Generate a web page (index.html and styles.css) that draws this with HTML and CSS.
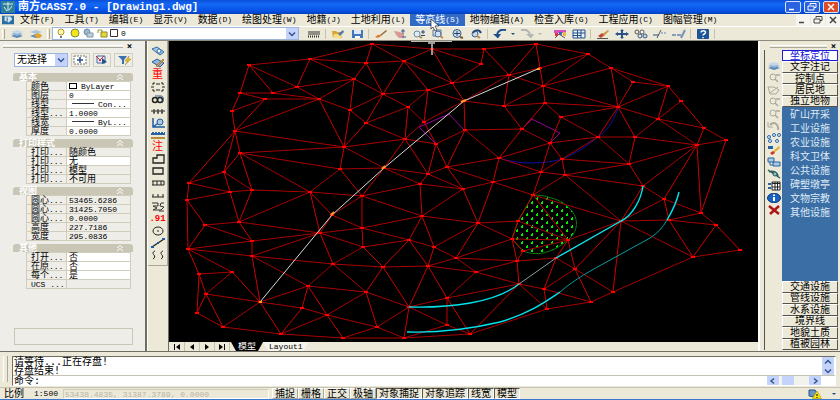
FILE: index.html
```html
<!DOCTYPE html>
<html lang="zh-CN">
<head>
    <meta charset="UTF-8">
    <meta name="viewport" content="width=device-width, initial-scale=1.0">
    <title>南方CASS7.0 - [Drawing1.dwg]</title>
    <link rel="stylesheet" href="styles.css">
</head>
<body>
    <svg class="defs" width="0" height="0">
        <symbol id="layers" viewBox="0 0 14 10"><path d="M1 7l6-2 6 2-6 2z" fill="#5b86b5"/><path d="M1 5l6-2 6 2-6 2z" fill="#8fb2d8"/><path d="M1 3l6-2 6 2-6 2z" fill="#c3d6ea"/></symbol>
        <symbol id="layers2" viewBox="0 0 14 10"><path d="M1 7l6-2 6 2-6 2z" fill="#5b86b5"/><path d="M1 3l6-2 6 2-6 2z" fill="#a9c4e2"/><path d="M5 6l4-2 4 2-2 3H8z" fill="#e0a52c"/></symbol>
        <symbol id="ltype" viewBox="0 0 14 10"><path d="M1 3h12M1 5h12" stroke="#333"/><path d="M1 7.500h12" stroke="#333" stroke-dasharray="1 1" stroke-width="2"/></symbol>
        <symbol id="open" viewBox="0 0 14 10"><path d="M1 2h4l1 1h5v6H2z" fill="#d9a53a"/><path d="M3 5h9l-2 4H2z" fill="#f6dd84"/><path d="M7 5l5-4 1 2-4 4z" fill="#4e7db0"/></symbol>
        <symbol id="save" viewBox="0 0 14 10"><path d="M2 1h11v8H2z" fill="#3f78bd"/><path d="M4 1h7v4H4z" fill="#dfeaf6"/><path d="M5 7h5v2H5z" fill="#fff"/></symbol>
        <symbol id="brush" viewBox="0 0 14 10"><path d="M6 6l6-5 1 1-6 5z" fill="#9a6a3b"/><path d="M1 8c2 0 2-3 5-2l1 1C5 9 3 9 1 8z" fill="#e0762c"/></symbol>
        <symbol id="hand" viewBox="0 0 14 10"><path d="M1 2l6 1 4 2v4H6L3 6z" fill="#d89a96"/><path d="M10 0v5M8 2h4M9 8h4" stroke="#3b5f92"/></symbol>
        <symbol id="zoompm" viewBox="0 0 14 10"><circle cx="5" cy="5" r="3" fill="#dcebf5" stroke="#6989a8"/><path d="M7 7l3 2" stroke="#b98c45" stroke-width="2"/><path d="M11 1v4M9 3h4M9 6.500h4" stroke="#2b4a78"/></symbol>
        <symbol id="zoomwin" viewBox="0 0 14 10"><path d="M2 1h8v6H2z" fill="none" stroke="#5477a1"/><circle cx="7" cy="5" r="3" fill="#d2e4f3" stroke="#436a96"/><path d="M9 7l3 2" stroke="#b98c45" stroke-width="2"/></symbol>
        <symbol id="zoomall" viewBox="0 0 14 10"><circle cx="7" cy="4.500" r="4" fill="#cfe0ee" stroke="#33577f"/><path d="M4 4.500h6M7 2v5" stroke="#22426d"/><path d="M10 8l3 1" stroke="#7d5b2b" stroke-width="2"/></symbol>
        <symbol id="zoomprev" viewBox="0 0 14 10"><circle cx="6" cy="5" r="3" fill="#c5d8ea" stroke="#3e648f"/><path d="M4 4c1-3 6-4 8 0" fill="none" stroke="#23497b" stroke-width="2"/><path d="M8 7l3 2" stroke="#b98c45" stroke-width="2"/></symbol>
        <symbol id="undo" viewBox="0 0 14 10"><path d="M13 1C8 0 4 2 4 7" fill="none" stroke="#1f4e8c" stroke-width="2"/><path d="M0 5h8L5 9.500z" fill="#1f4e8c"/></symbol>
        <symbol id="redo" viewBox="0 0 14 10"><path d="M1 1c5-1 9 1 9 6" fill="none" stroke="#b3b5b5" stroke-width="2"/><path d="M6 5h8l-3 4.500z" fill="#b3b5b5"/></symbol>
        <symbol id="palette" viewBox="0 0 14 10"><path d="M1 1h12v3H1z" fill="#d94fc0"/><path d="M2 4h3v3H2z" fill="#e8332a"/><path d="M6 3h3v3H6z" fill="#3568c8"/><path d="M10 3h3v4h-3z" fill="#e9b93c"/><path d="M2 9l4-4 6 4" fill="none" stroke="#654c72"/></symbol>
        <symbol id="table" viewBox="0 0 14 10"><path d="M1 1h12v8H1z" fill="#e8f0f8" stroke="#27518a"/><path d="M5.500 1v8M9 1v8M1 4h12M1 6.500h8" stroke="#27518a"/></symbol>
        <symbol id="eraser" viewBox="0 0 14 10"><path d="M5 6l7-5 1 1-6 6z" fill="#d1963c"/><path d="M2 7l4-3 2 2-3 3z" fill="#c2443a"/><path d="M1 9.500h11" stroke="#555"/></symbol>
        <symbol id="move" viewBox="0 0 14 10"><path d="M7 1v8M2 5h10" stroke="#2a5286" stroke-width="2"/><path d="M7 0l2 2H5zM7 10l2-2H5zM0 5l3-2v4zM14 5l-3-2v4z" fill="#2a5286"/></symbol>
        <symbol id="copy" viewBox="0 0 14 10"><circle cx="3" cy="3" r="2" fill="none" stroke="#555"/><circle cx="8" cy="3" r="2" fill="#fff" stroke="#555"/><circle cx="6" cy="7" r="2" fill="none" stroke="#39587d"/><circle cx="11" cy="7" r="2" fill="#c7daea" stroke="#39587d"/></symbol>
        <symbol id="trim" viewBox="0 0 14 10"><path d="M0 6h6" stroke="#26508a"/><path d="M4 9l4-8" stroke="#555"/><path d="M8 4h6" stroke="#5c8ac0" stroke-dasharray="2 1"/></symbol>
        <symbol id="extend" viewBox="0 0 14 10"><path d="M0 6h4M5 6h4" stroke="#26508a"/><path d="M9 9l4-8" stroke="#6d93be" stroke-width="2"/></symbol>
        <symbol id="help" viewBox="0 0 14 10"><rect x="1" width="12" height="10" rx="1" fill="#1d5499"/><path d="M5 3.500C5 1 9.500 1 9.500 3.500 9.500 5 7 5 7 6.500M7 8v1.200" fill="none" stroke="#fff" stroke-width="1.500"/></symbol>
        <symbol id="pencilLayer" viewBox="0 0 14 10"><path d="M1 4l5-3 7 4-4 4z" fill="#8fb5dc" stroke="#2a6098"/><path d="M5 8l7-7 1 1-7 7z" fill="#dca03c" stroke="#71501c" stroke-width=".5"/></symbol>
        <symbol id="eyeLayer" viewBox="0 0 14 10"><path d="M1 3l5-2 7 5-4 3z" fill="#a7c8e8" stroke="#2d6ca8"/><circle cx="8" cy="5" r="2" fill="#fff" stroke="#2d6ca8"/></symbol>
        <symbol id="brackets" viewBox="0 0 14 10"><path d="M4 1H2v2M2 7v2h2M10 1h2v2M12 7v2h-2M0 5h3M11 5h3M5 2h4M5 8h4" fill="none" stroke="#222"/></symbol>
        <symbol id="find" viewBox="0 0 14 10"><circle cx="4" cy="6" r="2.500" fill="none" stroke="#222" stroke-width="1.500"/><circle cx="9" cy="6" r="2.500" fill="none" stroke="#222" stroke-width="1.500"/><path d="M4 2h6c3 0 3 5 1 7" fill="none" stroke="#355b8c"/></symbol>
        <symbol id="fence" viewBox="0 0 14 10"><path d="M0 5h14M3 3v4M7 3v4M11 3v4M2 7h2M6 7h2M10 7h2" stroke="#222"/></symbol>
        <symbol id="axis" viewBox="0 0 14 10"><path d="M2 0v9h12M2 9l8-6" fill="none" stroke="#1c5ca4" stroke-width="1.500"/><circle cx="9" cy="4" r="3" fill="#a7c8e8" stroke="#1c5ca4"/></symbol>
        <symbol id="ruler" viewBox="0 0 14 10"><path d="M0 2h14v3H0z" fill="#28629f"/><path d="M0 7h14v2H0z" fill="#b98c3a"/><path d="M0 2.500h14" stroke="#fff" stroke-dasharray="1 2"/></symbol>
        <symbol id="poly" viewBox="0 0 14 10"><path d="M2 9V4h4V1h7v8z" fill="none" stroke="#222" stroke-width="1.300"/></symbol>
        <symbol id="rect" viewBox="0 0 14 10"><path d="M2 2h10v6H2z" fill="none" stroke="#222" stroke-width="1.300"/></symbol>
        <symbol id="rail" viewBox="0 0 14 10"><path d="M1 3h12M1 7h12M2 3v4M6 3v4M10 3v4M13 3v4" stroke="#222"/></symbol>
        <symbol id="comb" viewBox="0 0 14 10"><path d="M1 7h12M2 4v3M7 4v3M12 4v3" stroke="#222"/></symbol>
        <symbol id="bush" viewBox="0 0 14 10"><path d="M1 1h6v3H2l4 2-4 2h8l3-3-4-1 1-3h3M8 9h5" fill="none" stroke="#333"/></symbol>
        <symbol id="point" viewBox="0 0 14 10"><ellipse cx="7" cy="5" rx="5" ry="4" fill="none" stroke="#222"/><path d="M6 5h2" stroke="#222"/></symbol>
        <symbol id="slope" viewBox="0 0 14 10"><path d="M1 9l12-8" stroke="#222" stroke-width="1.300"/><path d="M0 8h3v2H0zM11 0h3v2h-3zM6 4h2v2H6z" fill="#1c5ca4"/></symbol>
        <symbol id="waves" viewBox="0 0 14 10"><path d="M4 1C1 2 2 4 3 5s1 3-1 4M12 1c-3 1-2 3-1 4s1 3-1 4" fill="none" stroke="#222"/></symbol>
        <symbol id="zoomgrey" viewBox="0 0 14 10"><circle cx="6" cy="4" r="3" fill="none" stroke="#aaa89c"/><path d="M8 6l3 3M9 2h4" stroke="#aaa89c" stroke-width="1.500"/></symbol>
        <symbol id="shapegrey" viewBox="0 0 14 10"><path d="M1 2h6l5 3-3 4H3z" fill="none" stroke="#aaa89c"/><path d="M3 8l8-6" stroke="#aaa89c"/></symbol>
        <symbol id="undogrey" viewBox="0 0 14 10"><path d="M3 4c4-4 9-1 8 5" fill="none" stroke="#aaa89c" stroke-width="2"/><path d="M1 1v5h5" fill="none" stroke="#aaa89c"/></symbol>
        <symbol id="dots" viewBox="0 0 14 10"><g fill="#e4eefa" stroke="#2668ad"><circle cx="7" cy="2" r="1.500"/><circle cx="12" cy="2" r="1.500"/><circle cx="2" cy="4" r="1.500"/><circle cx="3" cy="8" r="1.500"/><circle cx="10" cy="8" r="1.500"/></g></symbol>
        <symbol id="erase2" viewBox="0 0 14 10"><path d="M1 1h5v3H1z" fill="#28629f"/><path d="M5 7l7-6 1 2-6 5z" fill="#e0b13c"/><path d="M3 8l3-2 2 2-3 2z" fill="#c33"/></symbol>
        <symbol id="props" viewBox="0 0 14 10"><path d="M1 1h6v4H1zM6 5h7v4H6z" fill="#a7c8e8" stroke="#28629f"/><path d="M3 5v3h3" fill="none" stroke="#28629f"/></symbol>
        <symbol id="link" viewBox="0 0 14 10"><path d="M1 1l12 8M2 3c3-2 9 0 9 5" fill="none" stroke="#285f58" stroke-width="1.500"/><circle cx="8" cy="5" r="2" fill="#8fc0cf" stroke="#285f58"/></symbol>
        <symbol id="grid" viewBox="0 0 14 10"><path d="M5 1h8v8H5z" fill="#fff" stroke="#222"/><path d="M5 2.500h8M8 1v8M10.500 1v8M5 6h8" stroke="#222"/><path d="M1 3h3M1 7h3" stroke="#28629f" stroke-width="2"/></symbol>
        <symbol id="info" viewBox="0 0 14 10"><ellipse cx="7" cy="5" rx="6.500" ry="4.800" fill="#1862c0" stroke="#123a78"/><path d="M7 1.500v1.500M7 4v4" stroke="#fff" stroke-width="2"/></symbol>
        <symbol id="cross" viewBox="0 0 14 10"><path d="M2 1l10 8M12 1L3 9" stroke="#b01515" stroke-width="2.500"/></symbol>
        <symbol id="down" viewBox="0 0 10 8"><path d="M2 2.500l3 3 3-3" fill="none" stroke="#35548c" stroke-width="1.500"/></symbol>
        <symbol id="up" viewBox="0 0 10 8"><path d="M2 5.500l3-3 3 3" fill="none" stroke="#35548c" stroke-width="1.500"/></symbol>
        <symbol id="fold" viewBox="0 0 10 8"><path d="M2 4l3-2.500L8 4M2 7l3-2.500L8 7" fill="none" stroke="#fff"/></symbol>
        <symbol id="min" viewBox="0 0 14 10"><path d="M3 7.500h5" stroke="currentColor" stroke-width="1.500"/></symbol>
        <symbol id="restore" viewBox="0 0 14 10"><path d="M5 3V1.500h6v4H9M3 4h6v4H3z" fill="none" stroke="currentColor"/></symbol>
        <symbol id="close" viewBox="0 0 14 10"><path d="M4 2l6 6M10 2L4 8" stroke="currentColor" stroke-width="1.500"/></symbol>
    </svg>

    <header class="titlebar">
        <svg class="logo" viewBox="0 0 14 12"><path d="M0 0h14v12H0z" fill="#2f7f96"/><path d="M2 3h10M7 1v9M3 6l3 4M11 5L8 9" stroke="#d9eef2"/></svg>
        <h1>南方CASS7.0 - [Drawing1.dwg]</h1>
        <div class="winbtns">
            <button aria-label="最小化"><svg><use href="#min"/></svg></button>
            <button aria-label="还原"><svg><use href="#restore"/></svg></button>
            <button class="red" aria-label="关闭"><svg><use href="#close"/></svg></button>
        </div>
    </header>

    <nav class="menubar">
        <svg class="logo" viewBox="0 0 14 12"><path d="M0 1h14v10H0z" fill="#2b6ea4"/><path d="M3 2h7l2 3-4 4-5-2z" fill="#cfe5f2"/><path d="M6 3v5" stroke="#1c4f7d"/></svg>
        <button>文件<small>(F)</small></button>
        <button>工具<small>(T)</small></button>
        <button>编辑<small>(E)</small></button>
        <button>显示<small>(V)</small></button>
        <button>数据<small>(D)</small></button>
        <button>绘图处理<small>(W)</small></button>
        <button>地籍<small>(J)</small></button>
        <button>土地利用<small>(L)</small></button>
        <button class="active">等高线<small>(S)</small>
            <svg class="cursor" viewBox="0 0 10 14"><path d="M1 1v10l2-2 2 4 2-1-2-4h4z" fill="#fff" stroke="#222" stroke-width=".7"/></svg>
        </button>
        <button>地物编辑<small>(A)</small></button>
        <button>检查入库<small>(G)</small></button>
        <button>工程应用<small>(C)</small></button>
        <button>图幅管理<small>(M)</small></button>
        <div class="docbtns">
            <button aria-label="最小化文档"><svg><use href="#min"/></svg></button>
            <button aria-label="还原文档"><svg><use href="#restore"/></svg></button>
            <button aria-label="关闭文档"><svg><use href="#close"/></svg></button>
        </div>
    </nav>

    <div class="toolbar">
        <i class="grip"></i>
        <button aria-label="图层"><svg><use href="#layers"/></svg></button>
        <button aria-label="图层状态"><svg><use href="#layers2"/></svg></button>
        <i class="grip"></i>
        <div class="combo layer">
            <svg class="states" viewBox="0 0 62 10">
                <circle cx="5" cy="4" r="3" fill="#fff6a8" stroke="#a99a33"/><path d="M4 8h2v2H4z" fill="#777"/>
                <circle cx="19" cy="5" r="4" fill="#f7e21c" stroke="#6f9440"/>
                <circle cx="31" cy="4" r="3" fill="#9db9cf" stroke="#6f8ca4"/><path d="M31 5h6v4h-6z" fill="#c2cfda" stroke="#7f96a8"/>
                <path d="M42 5V2h4v2" fill="none" stroke="#97922a"/><path d="M45 4h6v5h-6z" fill="#e5d83a" stroke="#8d8726"/>
                <path d="M54.500 1.500h7v7h-7z" fill="#fff" stroke="#333"/>
            </svg>
            <select aria-label="当前图层"><option>0</option></select>
            <span class="arrow"><svg><use href="#down"/></svg></span>
        </div>
        <i class="gap"></i>
        <button aria-label="线型"><svg><use href="#ltype"/></svg></button>
        <i class="sep"></i>
        <button aria-label="打开"><svg><use href="#open"/></svg></button>
        <button aria-label="保存"><svg><use href="#save"/></svg></button>
        <i class="sep"></i>
        <button aria-label="特性匹配"><svg><use href="#brush"/></svg></button>
        <button aria-label="平移"><svg><use href="#hand"/></svg></button>
        <button aria-label="实时缩放"><svg><use href="#zoompm"/></svg></button>
        <button aria-label="窗口缩放"><svg><use href="#zoomwin"/></svg></button>
        <button aria-label="全图"><svg><use href="#zoomall"/></svg></button>
        <button aria-label="前图"><svg><use href="#zoomprev"/></svg></button>
        <i class="sep"></i>
        <button aria-label="放弃"><svg><use href="#undo"/></svg></button>
        <i class="more"></i>
        <button aria-label="重做"><svg><use href="#redo"/></svg></button>
        <i class="more off"></i>
        <button aria-label="特性"><svg><use href="#palette"/></svg></button>
        <button aria-label="表格"><svg><use href="#table"/></svg></button>
        <i class="sep"></i>
        <button aria-label="删除"><svg><use href="#eraser"/></svg></button>
        <button aria-label="移动"><svg><use href="#move"/></svg></button>
        <button aria-label="复制"><svg><use href="#copy"/></svg></button>
        <button aria-label="修剪"><svg><use href="#trim"/></svg></button>
        <button aria-label="延伸"><svg><use href="#extend"/></svg></button>
        <i class="sep"></i>
        <button aria-label="帮助"><svg><use href="#help"/></svg></button>
        <i class="sep"></i>
    </div>

    <main>
        <aside class="props">
            <div class="grabber"><i></i><button aria-label="关闭特性">×</button></div>
            <div class="picker">
                <div class="combo">
                    <select aria-label="选择对象"><option>无选择</option></select>
                    <span class="arrow"><svg><use href="#down"/></svg></span>
                </div>
                <button aria-label="切换"><svg viewBox="0 0 14 10"><path d="M1 1h12v8H1z" fill="#fff" stroke="#777" stroke-dasharray="2 1"/><path d="M4 5h6M7 2v6" stroke="#27518a" stroke-width="1.500"/></svg></button>
                <button aria-label="选择"><svg viewBox="0 0 14 10"><path d="M2 1h8v7H2z" fill="#e8eef8" stroke="#4a6a9a"/><path d="M1 1l5 5M9 1L4 6" stroke="#c8322a"/><path d="M7 3v6l5-2z" fill="#27518a"/></svg></button>
                <button aria-label="快速选择"><svg viewBox="0 0 14 10"><path d="M1 1h9L7 5v4H5V5z" fill="#3a6fae"/><path d="M12 1L8 6h3L8 10l6-6h-3z" fill="#f2c81e" stroke="#9b7b12" stroke-width=".5"/></svg></button>
            </div>
            <section>
                <h2>基本<svg><use href="#fold"/></svg></h2>
                <table>
                    <tr><th>颜色</th><td><i class="swatch"></i><small>ByLayer</small></td></tr>
                    <tr><th>图层</th><td><small>0</small></td></tr>
                    <tr><th>线型</th><td><i class="stroke"></i><small>Con...</small></td></tr>
                    <tr><th>线型<small>...</small></th><td><small>1.0000</small></td></tr>
                    <tr><th>线宽</th><td><i class="stroke"></i><small>ByL...</small></td></tr>
                    <tr><th>厚度</th><td><small>0.0000</small></td></tr>
                </table>
            </section>
            <section>
                <h2>打印样式<svg><use href="#fold"/></svg></h2>
                <table>
                    <tr><th>打印<small>...</small></th><td class="ro">随颜色</td></tr>
                    <tr><th>打印<small>...</small></th><td>无</td></tr>
                    <tr><th>打印<small>...</small></th><td class="ro">模型</td></tr>
                    <tr><th>打印<small>...</small></th><td class="ro">不可用</td></tr>
                </table>
            </section>
            <section>
                <h2>视图<svg><use href="#fold"/></svg></h2>
                <table>
                    <tr><th>圆心<small>...</small></th><td class="ro"><small>53465.6286</small></td></tr>
                    <tr><th>圆心<small>...</small></th><td class="ro"><small>31425.7050</small></td></tr>
                    <tr><th>圆心<small>...</small></th><td class="ro"><small>0.0000</small></td></tr>
                    <tr><th>高度</th><td class="ro"><small>227.7186</small></td></tr>
                    <tr><th>宽度</th><td class="ro"><small>295.0836</small></td></tr>
                </table>
            </section>
            <section>
                <h2>其他<svg><use href="#fold"/></svg></h2>
                <table>
                    <tr><th>打开<small>...</small></th><td>否</td></tr>
                    <tr><th>在原<small>...</small></th><td>否</td></tr>
                    <tr><th>每个<small>...</small></th><td>是</td></tr>
                    <tr><th><small>UCS ...</small></th><td class="ro"></td></tr>
                </table>
            </section>
            <div class="hint"></div>
        </aside>

        <div class="rail left">
            <div class="tools">
                <button aria-label="查看实体编码"><svg><use href="#eyeLayer"/></svg></button>
                <button aria-label="加入实体编码"><svg><use href="#pencilLayer"/></svg></button>
                <button class="word">重</button>
                <button aria-label="批量选取"><svg><use href="#brackets"/></svg></button>
                <button aria-label="查找"><svg><use href="#find"/></svg></button>
                <button aria-label="线型换向"><svg><use href="#fence"/></svg></button>
                <button aria-label="坐标"><svg><use href="#axis"/></svg></button>
                <button aria-label="距离"><svg><use href="#ruler"/></svg></button>
                <button class="word">注</button>
                <button aria-label="多点房屋"><svg><use href="#poly"/></svg></button>
                <button aria-label="四点房屋"><svg><use href="#rect"/></svg></button>
                <button aria-label="依比例围墙"><svg><use href="#rail"/></svg></button>
                <button aria-label="陡坎"><svg><use href="#comb"/></svg></button>
                <button aria-label="斜坡"><svg><use href="#bush"/></svg></button>
                <button class="word num">.91</button>
                <button aria-label="图根点"><svg><use href="#point"/></svg></button>
                <button aria-label="电力线"><svg><use href="#slope"/></svg></button>
                <button aria-label="道路"><svg><use href="#waves"/></svg></button>
            </div>
        </div>

        <div class="drawing">
            <svg id="canvas" viewBox="169 41 589 300" preserveAspectRatio="xMinYMin meet">
                <defs>
                    <pattern id="hatch" width="10" height="8" patternUnits="userSpaceOnUse">
                        <path d="M1 2h2v2H1zM2 1h1v1H2zM6 6h2v2H6zM7 5h1v1H7z" fill="#00f000"/>
                    </pattern>
                </defs>
                <path d="M533 195C545 195 557 199 563 203C580 214 580 230 568 240C556 250 540 258 523 251L512 239L518 221Z" fill="url(#hatch)" stroke="#0a7d0a"/>
                <path d="M499 158C520 165 545 164 562 159C580 152 590 143 598 137C610 128 615 118 618 107" class="line blue"/>
                <path d="M436 144L419 127L449 114L464 130M522 129L532 119L560 133L550 143" class="line magenta"/>
                <g id="mesh"></g>
                <path d="M409 307C450 308 495 303 519 284M556 258L621 221C632 216 641 200 643 186" class="line cyan"/>
                <path d="M519 284L556 258" class="line dim"/>
                <path d="M407 332C440 333 470 329 500 322C530 313 545 302 560 292M667 220Q676 205 679 192" class="line cyan"/>
                <path d="M560 292C575 279 590 271 612 259L650 238Q661 231 667 220" class="line teal"/>
                <path d="M260 302L332 215L384 168L464 101L540 68" class="line white"/>
                <path d="M259 302h3M331 215l3-3M382 169l3-3M461 102l5-2M537 69h3" class="line orange"/>
                <path d="M411 41.500h41" stroke="#bdbbb0"/>
                <path d="M428 43h7M432 42v13" stroke="#999" stroke-width="2"/>
            </svg>
            <div class="tabs">
                <button aria-label="第一页"><svg viewBox="0 0 10 8"><path d="M2.500 1v6" stroke="#000"/><path d="M8 1v6L4 4z"/></svg></button>
                <button aria-label="上一页"><svg viewBox="0 0 10 8"><path d="M7 1v6L3 4z"/></svg></button>
                <button aria-label="下一页"><svg viewBox="0 0 10 8"><path d="M3 1v6l4-3z"/></svg></button>
                <button aria-label="最后一页"><svg viewBox="0 0 10 8"><path d="M2 1v6l4-3z"/><path d="M7.500 1v6" stroke="#000"/></svg></button>
                <a class="tab current" href="#canvas">模型</a>
                <a class="tab" href="#canvas"><small>Layout1</small></a>
            </div>
        </div>

        <aside class="screenmenu">
            <div class="grabber"><i></i><button aria-label="关闭屏幕菜单">×</button></div>
            <div class="cols">
                <div class="rail right">
                    <button aria-label="图层管理"><svg><use href="#layers"/></svg></button>
                    <button aria-label="缩放"><svg><use href="#zoomgrey"/></svg></button>
                    <button aria-label="选择区域"><svg><use href="#shapegrey"/></svg></button>
                    <button aria-label="放大"><svg><use href="#zoomgrey"/></svg></button>
                    <button aria-label="缩小"><svg><use href="#zoomgrey"/></svg></button>
                    <button aria-label="回退"><svg><use href="#undogrey"/></svg></button>
                    <button aria-label="展点"><svg><use href="#dots"/></svg></button>
                    <button aria-label="擦除"><svg><use href="#erase2"/></svg></button>
                    <button aria-label="属性"><svg><use href="#props"/></svg></button>
                    <button aria-label="连接"><svg><use href="#link"/></svg></button>
                    <button aria-label="列表"><svg><use href="#grid"/></svg></button>
                    <button aria-label="信息"><svg><use href="#info"/></svg></button>
                    <button aria-label="取消"><svg><use href="#cross"/></svg></button>
                </div>
                <div class="cats">
                    <div class="stack top">
                        <button class="on">坐标定位</button>
                        <button>文字注记</button>
                        <button>控制点</button>
                        <button>居民地</button>
                        <button>独立地物</button>
                    </div>
                    <ul>
                        <li><a href="#canvas">矿山开采</a></li>
                        <li><a href="#canvas">工业设施</a></li>
                        <li><a href="#canvas">农业设施</a></li>
                        <li><a href="#canvas">科文卫体</a></li>
                        <li><a href="#canvas">公共设施</a></li>
                        <li><a href="#canvas">碑塑墩亭</a></li>
                        <li><a href="#canvas">文物宗教</a></li>
                        <li><a href="#canvas">其他设施</a></li>
                    </ul>
                    <div class="stack bottom">
                        <button>交通设施</button>
                        <button>管线设施</button>
                        <button>水系设施</button>
                        <button>境界线</button>
                        <button>地貌土质</button>
                        <button>植被园林</button>
                    </div>
                </div>
            </div>
        </aside>
    </main>

    <section class="command">
        <i class="grip"></i>
        <div class="console">
            <div class="history">
                <p>请等待...正在存盘!<br>存盘结束!</p>
                <div class="vscroll"><button aria-label="上滚"><svg><use href="#up"/></svg></button><button aria-label="下滚"><svg><use href="#down"/></svg></button></div>
            </div>
            <div class="entry">
                <label for="cmd">命令:</label>
                <input id="cmd" type="text">
                <div class="hscroll"><button aria-label="左滚"><svg viewBox="0 0 10 8"><path d="M6 1.500L3 4l3 2.500" fill="none" stroke="#35548c" stroke-width="1.500"/></svg></button><i></i><button aria-label="右滚"><svg viewBox="0 0 10 8"><path d="M4 1.500L7 4 4 6.500" fill="none" stroke="#35548c" stroke-width="1.500"/></svg></button></div>
            </div>
        </div>
    </section>

    <footer class="status">
        <span class="scale">比例</span><b>1:500</b>
        <output>53438.4835, 31387.3789, 0.0000</output>
        <div class="modes">
            <button>捕捉</button>
            <button>栅格</button>
            <button>正交</button>
            <button>极轴</button>
            <button class="in">对象捕捉</button>
            <button class="in">对象追踪</button>
            <button class="in">线宽</button>
            <button class="in">模型</button>
        </div>
        <svg class="tray" viewBox="0 0 14 10"><path d="M1 1h6l2 3-3 4-5-1z" fill="#6d93be" stroke="#27518a"/><path d="M9 2l4.500 7.500h-9z" fill="#ffe600" stroke="#a89400" stroke-width=".6"/><path d="M9 5v2M9 8v1" stroke="#000"/></svg>
        <i class="more"></i>
    </footer>
    <script src="mesh.js"></script>
</body>
</html>
```
FILE: styles.css
```css
*{
    box-sizing: border-box;
}
body{
    margin: 0;
    min-height: 100vh;
    display: flex;
    flex-direction: column;
    background-color: #ece9d8;
    color: #000;
    font: 10px/12px "DejaVu Sans Mono", "Noto Sans CJK SC", monospace;
    white-space: nowrap;
    overflow: hidden;
}
button,select,input{
    font: inherit;
    color: inherit;
    margin: 0;
    padding: 0;
    border: 0;
    background: none;
    border-radius: 0;
}
small,b,output{
    font-family: "Liberation Mono", monospace;
    font-size: 8px;
    font-weight: normal;
}
h1,h2,p,ul{
    margin: 0;
    padding: 0;
}
ul{
    list-style: none;
}
a{
    color: inherit;
    text-decoration: none;
}
svg{
    display: block;
    flex: none;
    width: 14px;
    height: 10px;
}
svg.defs{
    position: absolute;
    width: 0;
    height: 0;
}
button{
    display: flex;
    align-items: center;
    justify-content: center;
}

/* 标题栏 */
.titlebar{
    display: flex;
    align-items: center;
    height: 14px;
    padding: 0 1px;
    background: linear-gradient(#0a4fd8, #1467f4 30%, #0550e4 80%, #0340b8);
    color: #fff;
}
.titlebar .logo{
    height: 12px;
    margin-right: 3px;
}
.titlebar h1{
    flex: 1;
    font: bold 11px/14px "Liberation Mono", "Noto Sans CJK SC", monospace;
}
.winbtns{
    display: flex;
    gap: 3px;
}
.winbtns button{
    width: 16px;
    height: 12px;
    border: 1px solid #d6e2fb;
    border-radius: 2px;
    background-color: #2a62e0;
}
.winbtns .red{
    background-color: #dc4a26;
}

/* 菜单 */
.menubar{
    display: flex;
    height: 12px;
    padding-left: 2px;
}
.menubar .logo{
    width: 12px;
    height: 12px;
    margin-right: 1px;
}
.menubar>button{
    padding: 0 5px;
}
.menubar .active{
    position: relative;
    background-color: #316ac5;
    color: #fff;
}
.cursor{
    position: absolute;
    left: 20px;
    top: 4px;
    width: 10px;
    height: 14px;
    z-index: 2;
}
.docbtns{
    display: flex;
    gap: 1px;
    margin-left: auto;
    color: #444;
}
.docbtns button{
    width: 14px;
    background-color: #f5f4ee;
}

/* 工具栏 */
.toolbar{
    display: flex;
    align-items: center;
    height: 15px;
    border-top: 1px solid #fff;
    border-bottom: 1px solid #8d8b7e;
}
.toolbar>button{
    width: 19px;
}
.grip{
    width: 3px;
    height: 10px;
    margin: 0 2px;
    border-left: 1px solid #fff;
    border-right: 1px solid #aca899;
}
.sep{
    width: 1px;
    height: 10px;
    margin: 0 2px;
    background-color: #c5c2b2;
}
.gap{
    width: 5px;
}
.more{
    width: 0;
    margin: 0 2px;
    border: 2px solid transparent;
    border-top-color: #234a80;
    border-bottom: 0;
}
.more.off{
    border-top-color: #b8b6a8;
    margin-right: 8px;
}
.combo{
    display: flex;
    align-items: stretch;
    border: 1px solid #9db5d8;
    background-color: #fff;
}
.combo select{
    flex: 1;
    width: 0;
    appearance: none;
    outline: 0;
}
.combo.layer{
    width: 247px;
    height: 13px;
    padding-left: 3px;
}
.layer select{
    font-family: "Liberation Mono", monospace;
    font-size: 8px;
    padding-left: 3px;
}
.states{
    width: 62px;
}
.arrow{
    display: flex;
    align-items: center;
    justify-content: center;
    width: 12px;
    background-color: #c3d3fb;
    pointer-events: none;
}
.arrow svg,.vscroll svg,.hscroll svg,h2 svg{
    width: 10px;
    height: 8px;
}

/* 中间部分 */
main{
    flex: 1;
    display: flex;
    min-height: 0;
}
.grabber{
    display: flex;
    align-items: center;
    height: 8px;
}
.grabber i{
    flex: 1;
    height: 3px;
    border-top: 1px solid #fff;
    border-bottom: 1px solid #aca899;
}
.grabber button{
    width: 9px;
    height: 7px;
    margin-left: 2px;
    font-size: 9px;
    line-height: 7px;
    font-weight: bold;
}
.props{
    display: flex;
    flex-direction: column;
    gap: 3px;
    width: 147px;
    padding: 1px 12px 6px 13px;
    border-right: 2px solid #716f64;
    background-color: #eeede8;
}
.props .grabber{
    margin: 0 -1px 0 -10px;
}
.picker{
    display: flex;
    gap: 3px;
    height: 14px;
    margin: 0 0 3px 1px;
}
.picker .combo{
    width: 54px;
}
.picker .combo select{
    padding-left: 2px;
}
.picker button{
    flex: 1;
    border: 1px solid #d2cfbf;
}
.props h2{
    display: flex;
    align-items: center;
    justify-content: space-between;
    height: 8px;
    padding: 0 8px 0 6px;
    border-radius: 3px 3px 0 0;
    background-color: #c9c6b5;
    color: #fff;
    font-size: 9px;
    line-height: 8px;
}
.props table{
    width: 105px;
    margin-left: 13px;
    table-layout: fixed;
    border-collapse: collapse;
    font-size: 9px;
    line-height: 8px;
}
.props th,.props td{
    height: 9px;
    padding: 0 0 0 2px;
    border: 1px solid #d0cdbd;
    text-align: left;
    font-weight: normal;
}
.props th{
    width: 40px;
    padding-left: 4px;
}
.props td{
    background-color: #fff;
}
.props td.ro{
    background-color: #eeede8;
}
.props small{
    line-height: 1px;
}
.swatch{
    display: inline-block;
    width: 8px;
    height: 6px;
    margin-right: 4px;
    border: 1px solid #000;
}
.stroke{
    display: inline-block;
    width: 22px;
    height: 1px;
    margin: 0 4px 3px 3px;
    background-color: #333;
}
.hint{
    height: 17px;
    margin: auto 0 0 1px;
    border: 1px solid #c9c6b5;
}
.rail{
    display: flex;
    flex-direction: column;
}
.rail button{
    width: 100%;
    height: 12px;
}
.rail.left{
    width: 21px;
    border-left: 1px solid #fff;
}
.tools{
    padding: 4px 0;
    border-right: 1px solid #aca899;
    border-bottom: 1px solid #aca899;
}
.rail .word{
    color: #f00;
    font-size: 11px;
}
.rail .num{
    font-family: "Liberation Mono", monospace;
    font-size: 9px;
    font-weight: bold;
}

/* 绘图区 */
.drawing{
    flex: 1;
    display: flex;
    flex-direction: column;
    min-width: 0;
    border-left: 1px solid #716f64;
    border-right: 2px solid #fff;
}
#canvas{
    flex: 1;
    width: 100%;
    min-height: 0;
    background-color: #000;
}
.line{
    fill: none;
    stroke-width: 1;
}
.blue{ stroke: #1010a8; }
.magenta{ stroke: #960096; }
.cyan{ stroke: #00e4ec; stroke-width: 1.4; }
.teal{ stroke: #079ca2; }
.dim{ stroke: #88a0a0; }
.white{ stroke: #d8d8d8; }
.orange{ stroke: #ff9a1a; stroke-width: 2; }
.flat{ stroke: #a80000; }
.steep{ stroke: #cc0000; }
.node{ stroke: #ff0000; stroke-width: 2; }
.tabs{
    display: flex;
    height: 9px;
    line-height: 9px;
    font-size: 9px;
    padding-left: 1px;
}
.tabs button{
    width: 15px;
    border-right: 1px solid #c5c2b2;
}
.tabs button svg{
    width: 10px;
    height: 8px;
}
.tab{
    padding: 0 6px;
    background-color: #f4f3ec;
    clip-path: polygon(0 0, 100% 0, calc(100% - 5px) 100%, 5px 100%);
}
.tab small{
    display: block;
    line-height: 9px;
}
.tab.current{
    padding: 0 7px;
    margin-left: 1px;
    background-color: #000;
    color: #fff;
}

/* 屏幕菜单 */
.screenmenu{
    width: 80px;
    padding: 1px 2px 1px 4px;
    display: flex;
    flex-direction: column;
}
.screenmenu .grabber{
    padding-left: 6px;
}
.cols{
    flex: 1;
    display: flex;
    border-left: 1px solid #55534a;
}
.rail.right{
    width: 17px;
    padding-top: 10px;
}
.cats{
    flex: 1;
    display: flex;
    flex-direction: column;
}
.stack{
    display: flex;
    flex-direction: column;
}
.stack.top{
    height: 57px;
}
.stack.bottom{
    height: 69px;
}
.stack button{
    flex: 1;
    min-height: 0;
    line-height: 10px;
    border: 1px solid #fff;
    border-right-color: #55534a;
    border-bottom-color: #55534a;
}
.stack .on{
    border: 1px solid #2020d0;
    background-color: #fff;
    color: #1010e0;
}
.cats ul{
    flex: 1;
    padding-top: 1px;
    background-color: #3a6ea5;
    color: #dfeaf5;
    text-align: center;
    line-height: 14px;
}

/* 命令行 */
.command{
    display: flex;
    height: 36px;
    padding: 4px 4px 1px 1px;
    border-top: 1px solid #716f64;
}
.command .grip{
    height: 26px;
    width: 5px;
}
.console{
    flex: 1;
    display: flex;
    flex-direction: column;
    margin-left: 2px;
    border: 1px solid #716f64;
    border-right-color: #fff;
    border-bottom-color: #fff;
    background-color: #fff;
}
.history{
    display: flex;
    justify-content: space-between;
    height: 19px;
    padding-left: 1px;
    line-height: 9px;
    border-bottom: 1px solid #c5c2b2;
}
.vscroll{
    width: 13px;
}
.vscroll button,.hscroll button{
    width: 12px;
    height: 9px;
    border-radius: 1px;
    background-color: #c3d3fb;
}
.entry{
    flex: 1;
    display: flex;
    align-items: center;
    padding-left: 1px;
    line-height: 9px;
}
.entry input{
    flex: 1;
    height: 9px;
    outline: 0;
}
.hscroll{
    display: flex;
    justify-content: space-between;
    width: 54px;
    margin-right: 14px;
    background-color: #f3f2ec;
}
.hscroll i{
    width: 12px;
    margin-right: 12px;
    background-color: #c3d3fb;
}

/* 状态栏 */
.status{
    display: flex;
    align-items: center;
    height: 13px;
    padding: 0 2px 0 4px;
    border-top: 1px solid #c5c2b2;
    border-bottom: 1px solid #3a78d0;
}
.status b{
    margin: 0 5px 0 10px;
}
.status output{
    width: 206px;
    height: 10px;
    padding-left: 1px;
    line-height: 10px;
    border: 1px solid #d0cdbd;
    border-right-color: #fff;
    border-bottom-color: #fff;
    color: #b7b4a4;
}
.modes{
    display: flex;
    flex: 1;
    margin-left: 3px;
}
.modes button{
    height: 11px;
    line-height: 9px;
    padding: 0 2px;
    border: 1px solid #fff;
    border-right-color: #aca899;
    border-bottom-color: #aca899;
}
.modes .in{
    border-color: #55534a #fff #fff #55534a;
}
.tray{
    margin-right: 8px;
}
```
FILE: mesh.js
```js
// 三角网的点
var points = {
    a: [249, 65], b: [310, 59], c: [297, 87], d: [273, 93], e: [240, 93], f: [265, 99], g: [232, 111],
    h: [319, 99], i: [354, 79], j: [235, 131], k: [240, 153], l: [224, 172], m: [189, 183], n: [187, 200],
    o: [230, 192], p: [252, 190], q: [239, 222], r: [205, 225], s: [188, 249], t: [252, 241], u: [252, 256],
    v: [199, 274], w: [232, 272], x: [206, 294], y: [197, 313], z: [223, 327],
    A: [260, 302], B: [281, 334], C: [308, 286], D: [302, 308], E: [327, 315], F: [343, 338], G: [333, 264],
    H: [320, 233], I: [310, 192], J: [332, 215], K: [340, 169], L: [344, 147], M: [350, 110], N: [366, 123],
    O: [366, 63], P: [362, 196], Q: [362, 228], R: [363, 247], S: [366, 292], T: [372, 44], U: [404, 61],
    V: [383, 94], W: [432, 49], X: [484, 49], Y: [481, 64], Z: [536, 44],
    a1: [452, 83], b1: [509, 75], c1: [540, 68], d1: [428, 90], e1: [408, 107], f1: [424, 122], g1: [464, 101],
    h1: [465, 130], i1: [405, 139], j1: [436, 144], k1: [504, 106], l1: [543, 86], m1: [545, 103], n1: [522, 129],
    o1: [550, 143], p1: [499, 158], q1: [447, 167], r1: [428, 174], s1: [384, 168], t1: [420, 184], u1: [463, 189],
    v1: [493, 182], w1: [541, 172], x1: [533, 195], y1: [422, 216], z1: [478, 223],
    A1: [518, 221], B1: [512, 239], C1: [409, 240], D1: [434, 247], E1: [456, 258], F1: [428, 266], G1: [383, 267],
    H1: [476, 272], I1: [523, 251], J1: [517, 261], K1: [519, 284], L1: [544, 289], M1: [547, 309], N1: [447, 298],
    O1: [409, 307], P1: [447, 325], Q1: [470, 334], R1: [404, 338], S1: [377, 327], T1: [556, 258],
    A2: [588, 54], B2: [611, 68], C2: [633, 82], D2: [668, 86], E2: [681, 101], F2: [618, 107], G2: [658, 119],
    H2: [704, 128], I2: [726, 140], J2: [697, 145], K2: [561, 117], L2: [598, 137], M2: [635, 137], N2: [562, 159],
    O2: [565, 175], P2: [629, 164], Q2: [643, 186], R2: [664, 199], S2: [701, 213], T2: [669, 220], U2: [621, 221],
    V2: [716, 225], W2: [740, 250], X2: [693, 257], Y2: [568, 240], Z2: [575, 269], A3: [613, 292], B3: [591, 302]
};
// 每一项第一个是起点，后面是和它相连的点
var edges = [
    'a b c d e', 'b T c i O', 'c d i h', 'd e h', 'e g f', 'f g h j', 'g j', 'h j i M L', 'i M O V',
    'j m l k L', 'k l p I K L', 'l m o p', 'm n o', 'n o r s', 'o p q', 'p q I', 'q I r t H', 'r s t',
    's t u w v', 't u H', 'u H G C A', 'v w x y', 'w x A', 'x y z A', 'y z', 'z A B', 'A B C D', 'B F D E',
    'C D E S G', 'D E', 'E F S S1', 'F S1 R1', 'G H R G1 S', 'H I J Q R', 'I J P K', 'J P Q', 'K L P s1',
    'L M N i1 s1', 'M N V', 'N V e1 i1', 'O T U V', 'P s1 Q t1 y1', 'Q R y1 C1', 'R G1 C1', 'S G1 S1 O1',
    'T U W', 'U V W d1 a1', 'V d1 e1', 'W X Y a1', 'X Y Z b1', 'Y a1', 'Z b1 c1 A2',
    'a1 d1 g1 b1', 'b1 c1 k1 g1 l1', 'c1 l1 A2', 'd1 e1 f1 g1', 'e1 f1 i1', 'f1 g1 i1 j1', 'g1 h1 k1',
    'h1 n1 j1 q1 p1', 'i1 j1 s1 r1', 'j1 r1 q1', 'k1 n1 l1 m1', 'l1 m1 B2 F2', 'm1 n1 K2 F2', 'n1 o1 p1',
    'o1 p1 w1 K2 L2 N2', 'p1 q1 v1 w1', 'q1 r1 u1 v1', 'r1 s1 t1 u1', 's1 t1', 't1 u1 y1', 'u1 v1 y1 z1',
    'v1 z1 w1 x1', 'w1 x1 N2 O2', 'x1 A1 O2 U2 Y2', 'y1 z1 C1 D1', 'z1 A1 B1 D1 E1',
    'A1 B1 Y2', 'B1 E1 I1 J1 Y2', 'C1 D1 F1 G1', 'D1 E1 F1', 'E1 F1 H1 J1', 'F1 G1 H1 N1 O1', 'G1 O1',
    'H1 J1 K1 N1', 'I1 J1 Y2', 'J1 K1 T1', 'K1 N1 Q1 L1 M1', 'L1 M1 T1 Z2 B3', 'M1 Q1 B3', 'N1 O1 P1 Q1',
    'O1 P1 R1 S1', 'P1 Q1 R1', 'Q1 R1', 'R1 S1', 'T1 Y2 Z2 U2',
    'A2 B2 l1', 'B2 C2 D2 F2', 'C2 D2 F2', 'D2 E2 F2 G2', 'E2 G2 H2', 'F2 G2 K2 L2 M2', 'G2 H2 J2 M2',
    'H2 I2 J2', 'I2 J2 S2', 'J2 M2 P2 Q2 R2 S2', 'K2 L2', 'L2 M2 N2 P2', 'M2 P2', 'N2 O2 P2', 'O2 P2 Q2 U2',
    'P2 Q2', 'Q2 R2 U2', 'R2 S2 T2 U2', 'S2 T2 V2', 'T2 U2 V2 X2', 'U2 X2 Y2 Z2 A3', 'V2 W2 X2', 'W2 X2',
    'X2 A3', 'Y2 Z2', 'Z2 A3 B3', 'A3 B3'
];
var mesh = document.getElementById('mesh');
function addPath(d, name) {
    var path = document.createElementNS('http://www.w3.org/2000/svg', 'path');
    path.setAttribute('d', d);
    path.setAttribute('class', 'line ' + name);
    mesh.appendChild(path);
}
var flat = '', steep = '', nodes = '';
for (var n = 0; n < edges.length; n++) {
    var names = edges[n].split(' ');
    var from = points[names[0]];
    for (var k = 1; k < names.length; k++) {
        var to = points[names[k]];
        var seg = 'M' + from + 'L' + to;
        if (Math.abs(to[0] - from[0]) > Math.abs(to[1] - from[1])) {
            flat += seg;
        } else {
            steep += seg;
        }
    }
}
for (var key in points) {
    nodes += 'M' + (points[key][0] - 2) + ' ' + points[key][1] + 'h4';
}
addPath(flat, 'flat');
addPath(steep, 'steep');
addPath(nodes, 'node');
```
